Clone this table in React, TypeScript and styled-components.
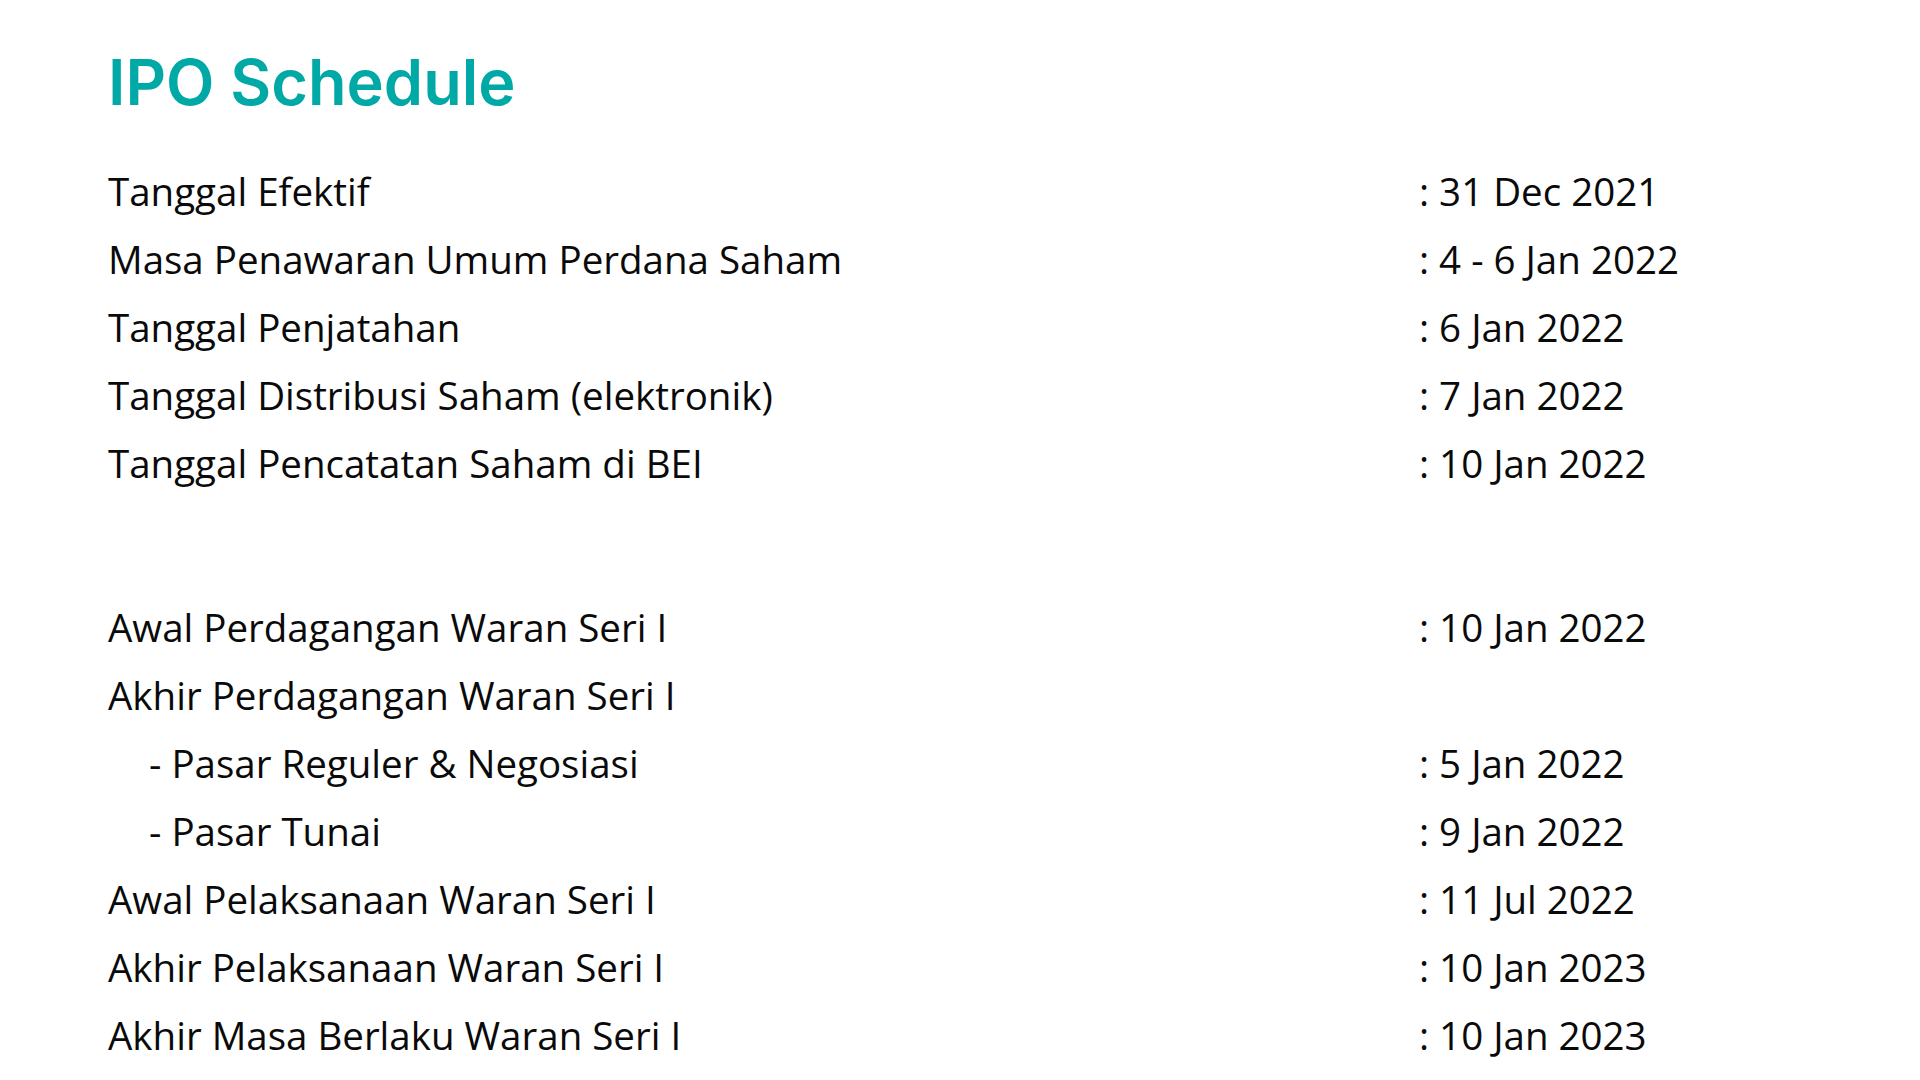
import styled, { createGlobalStyle } from 'styled-components'

const GlobalStyle = createGlobalStyle`
  html, body {
    margin: 0;
    padding: 0;
    background: #ffffff;
  }
`

const Page = styled.main`
  width: 1920px;
  height: 1080px;
  overflow: hidden;
  box-sizing: border-box;
  padding: 50px 0 0 108px;
  background: #ffffff;
`

const Title = styled.h1`
  margin: 0 0 43px 0;
  font-family: Inter, 'Liberation Sans', sans-serif;
  font-weight: 600;
  font-size: 63px;
  line-height: 64px;
  letter-spacing: 0;
  color: #00a9a5;
`

const Table = styled.div`
  display: grid;
  grid-template-columns: 1311px auto;
  font-family: 'Open Sans', 'Liberation Sans', sans-serif;
  font-size: 38.5px;
  line-height: 68px;
  color: #0a0a0a;
`

const Label = styled.div<{ $indent?: boolean }>`
  padding-left: ${(p) => (p.$indent ? '41px' : '0')};
  white-space: nowrap;
`

const Value = styled.div`
  white-space: nowrap;
`

const Spacer = styled.div`
  grid-column: 1 / -1;
  height: 96px;
`

type Row = { label: string; value?: string; indent?: boolean }

const first: Row[] = [
  { label: 'Tanggal Efektif', value: '31 Dec 2021' },
  { label: 'Masa Penawaran Umum Perdana Saham', value: '4 - 6 Jan 2022' },
  { label: 'Tanggal Penjatahan', value: '6 Jan 2022' },
  { label: 'Tanggal Distribusi Saham (elektronik)', value: '7 Jan 2022' },
  { label: 'Tanggal Pencatatan Saham di BEI', value: '10 Jan 2022' },
]

const second: Row[] = [
  { label: 'Awal Perdagangan Waran Seri I', value: '10 Jan 2022' },
  { label: 'Akhir Perdagangan Waran Seri I' },
  { label: '- Pasar Reguler & Negosiasi', value: '5 Jan 2022', indent: true },
  { label: '- Pasar Tunai', value: '9 Jan 2022', indent: true },
  { label: 'Awal Pelaksanaan Waran Seri I', value: '11 Jul 2022' },
  { label: 'Akhir Pelaksanaan Waran Seri I', value: '10 Jan 2023' },
  { label: 'Akhir Masa Berlaku Waran Seri I', value: '10 Jan 2023' },
]

function renderRows(rows: Row[]) {
  return rows.map((r) => [
    <Label key={r.label + '-l'} $indent={r.indent}>
      {r.label}
    </Label>,
    <Value key={r.label + '-v'}>{r.value ? `: ${r.value}` : ''}</Value>,
  ])
}

export default function App() {
  return (
    <>
      <GlobalStyle />
      <Page>
        <Title>IPO Schedule</Title>
        <Table>
          {renderRows(first)}
          <Spacer />
          {renderRows(second)}
        </Table>
      </Page>
    </>
  )
}
